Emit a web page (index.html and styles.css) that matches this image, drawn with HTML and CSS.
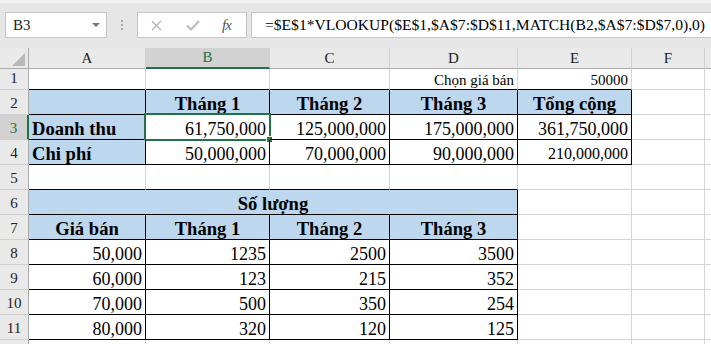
FILE: index.html
```html
<!DOCTYPE html>
<html lang="vi">
<head>
    <meta charset="UTF-8">
    <title>Bảng tính</title>
    <link rel="stylesheet" href="styles.css">
</head>
<body>
<div class="formula-bar">
    <div class="name-box">
        <span>B3</span>
        <span class="drop"></span>
    </div>
    <div class="grip"><i></i><i></i><i></i></div>
    <div class="fx-box">
        <svg class="btn-x" width="11" height="11" viewBox="0 0 11 11">
            <path d="M1 1 L10 10 M10 1 L1 10" stroke="#b4b4b4" stroke-width="1.3" fill="none"/>
        </svg>
        <svg class="btn-ok" width="14" height="11" viewBox="0 0 14 11">
            <path d="M1 5.5 L5 9.5 L13 1" stroke="#bdbdbd" stroke-width="2.2" fill="none"/>
        </svg>
        <span class="btn-fx">fx</span>
    </div>
    <div class="formula">=$E$1*VLOOKUP($E$1,$A$7:$D$11,MATCH(B2,$A$7:$D$7,0),0)</div>
</div>

<div class="sheet">
    <!-- заголовки столбцов -->
    <div class="hd corner"><span class="tri"></span></div>
    <div class="hd col">A</div>
    <div class="hd col sel">B</div>
    <div class="hd col">C</div>
    <div class="hd col">D</div>
    <div class="hd col">E</div>
    <div class="hd col">F</div>
    <div class="hd col"></div>

    <!-- 1 -->
    <div class="hd row">1</div>
    <div class="c bb small"></div>
    <div class="c bb small"></div>
    <div class="c bb small"></div>
    <div class="c bb small r">Chọn giá bán</div>
    <div class="c bb small r">50000</div>
    <div class="c small"></div>
    <div class="c small"></div>

    <!-- 2 -->
    <div class="hd row">2</div>
    <div class="c blue box"></div>
    <div class="c blue box b ctr">Tháng 1</div>
    <div class="c blue box b ctr">Tháng 2</div>
    <div class="c blue box b ctr">Tháng 3</div>
    <div class="c blue box b ctr">Tổng cộng</div>
    <div class="c"></div>
    <div class="c"></div>

    <!-- 3 -->
    <div class="hd row sel">3</div>
    <div class="c blue box b">Doanh thu</div>
    <div class="c box r active">61,750,000<span class="cursor"><span class="handle"></span></span></div>
    <div class="c box r">125,000,000</div>
    <div class="c box r">175,000,000</div>
    <div class="c box r">361,750,000</div>
    <div class="c"></div>
    <div class="c"></div>

    <!-- 4 -->
    <div class="hd row">4</div>
    <div class="c blue box b">Chi phí</div>
    <div class="c box r">50,000,000</div>
    <div class="c box r">70,000,000</div>
    <div class="c box r">90,000,000</div>
    <div class="c box r mid">210,000,000</div>
    <div class="c"></div>
    <div class="c"></div>

    <!-- 5 -->
    <div class="hd row">5</div>
    <div class="c bb"></div>
    <div class="c bb"></div>
    <div class="c bb"></div>
    <div class="c bb"></div>
    <div class="c"></div>
    <div class="c"></div>
    <div class="c"></div>

    <!-- 6 -->
    <div class="hd row">6</div>
    <div class="c blue box b ctr span4">Số lượng</div>
    <div class="c"></div>
    <div class="c"></div>
    <div class="c"></div>

    <!-- 7 -->
    <div class="hd row">7</div>
    <div class="c blue box b ctr">Giá bán</div>
    <div class="c blue box b ctr">Tháng 1</div>
    <div class="c blue box b ctr">Tháng 2</div>
    <div class="c blue box b ctr">Tháng 3</div>
    <div class="c"></div>
    <div class="c"></div>
    <div class="c"></div>

    <!-- 8 -->
    <div class="hd row">8</div>
    <div class="c box r">50,000</div>
    <div class="c box r">1235</div>
    <div class="c box r">2500</div>
    <div class="c box r">3500</div>
    <div class="c"></div>
    <div class="c"></div>
    <div class="c"></div>

    <!-- 9 -->
    <div class="hd row">9</div>
    <div class="c box r">60,000</div>
    <div class="c box r">123</div>
    <div class="c box r">215</div>
    <div class="c box r">352</div>
    <div class="c"></div>
    <div class="c"></div>
    <div class="c"></div>

    <!-- 10 -->
    <div class="hd row">10</div>
    <div class="c box r">70,000</div>
    <div class="c box r">500</div>
    <div class="c box r">350</div>
    <div class="c box r">254</div>
    <div class="c"></div>
    <div class="c"></div>
    <div class="c"></div>

    <!-- 11 -->
    <div class="hd row">11</div>
    <div class="c box r">80,000</div>
    <div class="c box r">320</div>
    <div class="c box r">120</div>
    <div class="c box r">125</div>
    <div class="c"></div>
    <div class="c"></div>
    <div class="c"></div>

    <!-- 12: видна только верхняя кромка -->
    <div class="hd edge"></div>
    <div class="c edge"></div>
    <div class="c edge"></div>
    <div class="c edge"></div>
    <div class="c edge"></div>
    <div class="c edge"></div>
    <div class="c edge"></div>
    <div class="c edge"></div>
</div>
</body>
</html>
```

FILE: styles.css
```css
/* Основа */
body {
    margin: 0;
    background-color: #e6e6e6;
    font-family: "Liberation Serif", "Times New Roman", serif;
    color: #000;
    overflow: hidden;
    height: 344px;
}

/* Строка формул */
.formula-bar {
    display: flex;
    align-items: center;
    height: 48px;
    padding: 9px 0 10px 5px;
    box-sizing: border-box;
    border-top: 3px solid #f0f0f0;
}

.name-box {
    width: 102px;
    height: 26px;
    box-sizing: border-box;
    background-color: #fff;
    border: 1px solid #c6c6c6;
    display: flex;
    align-items: center;
    justify-content: space-between;
    padding: 0 6px 0 7px;
    font-size: 15px;
    color: #222;
}

.drop {
    width: 0;
    height: 0;
    border-left: 4px solid transparent;
    border-right: 4px solid transparent;
    border-top: 4px solid #777;
}

.grip {
    width: 30px;
    display: flex;
    flex-direction: column;
    align-items: center;
    gap: 2px;
}

.grip i {
    width: 2px;
    height: 2px;
    background-color: #a8a8a8;
}

.fx-box {
    width: 110px;
    height: 26px;
    box-sizing: border-box;
    background-color: #fff;
    border: 1px solid #c6c6c6;
    display: flex;
    align-items: center;
}

.btn-x {
    margin-left: 13px;
}

.btn-ok {
    margin-left: 24px;
}

.btn-fx {
    margin-left: 22px;
    font-style: italic;
    font-size: 15px;
    color: #555;
    letter-spacing: -1px;
}

.formula {
    flex: 1;
    height: 26px;
    margin-left: 4px;
    box-sizing: border-box;
    background-color: #fff;
    border: 1px solid #c6c6c6;
    border-right: none;
    padding-left: 13px;
    font-size: 15.6px;
    line-height: 24px;
    white-space: nowrap;
    overflow: hidden;
}

/* Сетка листа */
.sheet {
    display: grid;
    grid-template-columns: 29px 117px 124px 120px 128px 114px 73px 1fr;
    grid-template-rows: 21px 21px repeat(10, 25px) 4px;
    background-color: #fff;
}

.hd {
    background-color: #e9e9e9;
    box-sizing: border-box;
    font-size: 15px;
    color: #222;
    display: flex;
    justify-content: center;
    align-items: flex-end;
    padding-bottom: 1px;
}

.hd.col {
    border-right: 1px solid #d0d0d0;
    border-bottom: 1px solid #ababab;
}

.hd.row {
    border-right: 1px solid #ababab;
    border-bottom: 1px solid #d0d0d0;
    padding-bottom: 2px;
}

.hd.edge {
    border-right: 1px solid #ababab;
}

.hd.col.sel {
    background-color: #d2d2d2;
    color: #217346;
    border-bottom: 2px solid #217346;
}

.hd.row.sel {
    background-color: #d2d2d2;
    color: #217346;
    border-right: 2px solid #217346;
}

.corner {
    border-right: 1px solid #ababab;
    border-bottom: 1px solid #ababab;
    justify-content: flex-end;
    padding: 0 3px 2px 0;
}

.tri {
    width: 0;
    height: 0;
    border-left: 13px solid transparent;
    border-bottom: 13px solid #b9b9b9;
}

.c {
    box-sizing: border-box;
    border-right: 1px solid #d4d4d4;
    border-bottom: 1px solid #d4d4d4;
    display: flex;
    align-items: flex-end;
    padding: 0 3px;
    font-size: 18px;
    line-height: 20px;
    white-space: nowrap;
    position: relative;
}

.c.edge {
    border-bottom: none;
}

.c.small {
    font-size: 15px;
    line-height: 18px;
}

.c.mid {
    font-size: 16px;
}

.c.r {
    justify-content: flex-end;
}

.c.ctr {
    justify-content: center;
}

.c.b {
    font-weight: bold;
    font-size: 18.6px;
}

.c.blue {
    background-color: #bdd7ee;
}

.c.box {
    border-right-color: #000;
    border-bottom-color: #000;
}

.c.bb {
    border-bottom-color: #000;
}

.span4 {
    grid-column: span 4;
}

/* Активная ячейка */
.cursor {
    position: absolute;
    left: -2px;
    top: -2px;
    right: -2px;
    bottom: -2px;
    border: 2px solid #217346;
}

.handle {
    position: absolute;
    right: -4px;
    bottom: -4px;
    width: 5px;
    height: 5px;
    background-color: #217346;
    border: 1px solid #fff;
}
```
